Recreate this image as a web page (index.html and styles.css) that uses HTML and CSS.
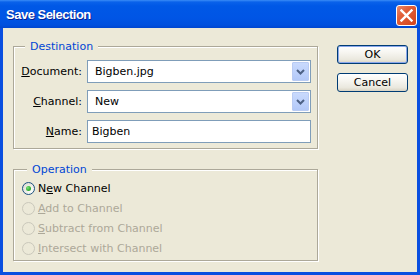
FILE: index.html
```html
<!DOCTYPE html>
<html lang="en">
<head>
    <meta charset="UTF-8">
    <meta name="viewport" content="width=device-width, initial-scale=1.0">
    <title>Save Selection</title>
    <link rel="stylesheet" href="styles.css">
</head>
<body>
    <div class="window">
        <div class="titlebar">
            <span class="title">Save Selection</span>
            <button class="close" title="Close">
                <svg width="13" height="13" viewBox="0 0 13 13">
                    <path d="M1.5 1.5 L11.5 11.5 M11.5 1.5 L1.5 11.5" stroke="#fff" stroke-width="2.4" stroke-linecap="square"/>
                </svg>
            </button>
        </div>
        <div class="client">
            <div class="groups">
                <fieldset class="group dest">
                    <legend>Destination</legend>
                    <div class="row">
                        <label><u>D</u>ocument:</label>
                        <div class="select">
                            <span class="value">Bigben.jpg</span>
                            <span class="drop"><svg width="9" height="6" viewBox="0 0 9 6"><path d="M1 1 L4.5 4.5 L8 1" fill="none" stroke="#4d6185" stroke-width="2"/></svg></span>
                        </div>
                    </div>
                    <div class="row">
                        <label><u>C</u>hannel:</label>
                        <div class="select">
                            <span class="value">New</span>
                            <span class="drop"><svg width="9" height="6" viewBox="0 0 9 6"><path d="M1 1 L4.5 4.5 L8 1" fill="none" stroke="#4d6185" stroke-width="2"/></svg></span>
                        </div>
                    </div>
                    <div class="row">
                        <label><u>N</u>ame:</label>
                        <input class="text" type="text" value="Bigben" spellcheck="false">
                    </div>
                </fieldset>
                <fieldset class="group op">
                    <legend>Operation</legend>
                    <div class="radio checked"><span class="circle"></span><span>N<u>e</u>w Channel</span></div>
                    <div class="radio disabled"><span class="circle"></span><span><u>A</u>dd to Channel</span></div>
                    <div class="radio disabled"><span class="circle"></span><span><u>S</u>ubtract from Channel</span></div>
                    <div class="radio disabled"><span class="circle"></span><span><u>I</u>ntersect with Channel</span></div>
                </fieldset>
            </div>
            <div class="buttons">
                <button class="btn default">OK</button>
                <button class="btn">Cancel</button>
            </div>
        </div>
    </div>
</body>
</html>
```

FILE: styles.css
```css
:root {
    --face: #ece9d8;
    --frame: #0a4fe0;
    --etch-dark: #aca899;
    --field-border: #7f9db9;
    --disabled: #aca899;
}
* {
    box-sizing: border-box;
}
html, body {
    margin: 0;
    padding: 0;
    width: 100%;
    height: 100%;
    font-family: "DejaVu Sans", sans-serif;
    font-size: 11px;
    color: #000;
}
.window {
    width: 420px;
    height: 275px;
    display: flex;
    flex-direction: column;
    background: var(--face);
}

.titlebar {
    height: 28px;
    flex: none;
    display: flex;
    align-items: center;
    justify-content: space-between;
    padding: 0 3px 0 6px;
    background: linear-gradient(to bottom, #3a8cf7 0, #0a62ea 2px, #0058e6 6px, #0055e5 18px, #0050de 25px, #0046d0 28px);
}
.title {
    font-family: "Liberation Sans", sans-serif;
    font-weight: bold;
    font-size: 13px;
    letter-spacing: -0.5px;
    color: #fff;
    text-shadow: 1px 1px 0 #0a1f8f;
}
.close {
    width: 21px;
    height: 21px;
    padding: 0;
    margin-top: 2px;
    display: flex;
    align-items: center;
    justify-content: center;
    border: 1px solid #fff;
    border-radius: 3px;
    background: linear-gradient(to bottom right, #e98a6c 0, #e2603a 35%, #d4431c 100%);
}

.client {
    flex: 1;
    display: grid;
    grid-template-columns: 305px 71px;
    column-gap: 19px;
    align-items: start;
    padding: 12px 0 0 10px;
    border: 3px solid var(--frame);
    border-top: none;
}

.group {
    margin: 0;
    border: 1px solid var(--etch-dark);
    box-shadow: 1px 1px 0 #fff, inset 1px 1px 0 #fff;
}
.group legend {
    margin-left: 5px;
    padding: 0 5px 0 5px;
    line-height: 13px;
    color: #0046d5;
    background: var(--face);
}
.dest {
    padding: 7px 6px 5px 6px;
    display: grid;
    row-gap: 7px;
}
.op {
    margin-top: 14px;
    padding: 2px 6px 2px 8px;
}

.row {
    display: grid;
    grid-template-columns: 1fr 224px;
    column-gap: 5px;
    align-items: center;
}
.row label {
    text-align: right;
}
.select {
    height: 23px;
    display: flex;
    align-items: center;
    justify-content: space-between;
    padding: 1px;
    border: 1px solid var(--field-border);
    background: #fff;
}
.select .value {
    padding-left: 6px;
}
.drop {
    width: 17px;
    height: 19px;
    display: flex;
    align-items: center;
    justify-content: center;
    border: 1px solid #b9cbf3;
    border-radius: 1px;
    background: linear-gradient(to bottom, #c9dafd 0, #bcd0fb 60%, #b2c8f8 100%);
}
.text {
    height: 23px;
    width: 224px;
    margin: 0;
    padding: 0 4px;
    border: 1px solid var(--field-border);
    font: inherit;
    outline: none;
}

.radio {
    height: 20px;
    display: flex;
    align-items: center;
    gap: 3px;
}
.circle {
    width: 13px;
    height: 13px;
    flex: none;
    display: flex;
    align-items: center;
    justify-content: center;
    border: 1px solid #1c5180;
    border-radius: 50%;
    background: radial-gradient(circle at 70% 70%, #fff 0, #f0f0ea 40%, #d6d5cc 100%);
}
.checked .circle::after {
    content: "";
    width: 5px;
    height: 5px;
    border-radius: 50%;
    background: radial-gradient(circle at 35% 35%, #7be27b 0, #2fb02f 60%, #1d8f1d 100%);
}
.disabled {
    color: var(--disabled);
}
.disabled .circle {
    border-color: #cac8bb;
    background: var(--face);
}

.buttons {
    display: flex;
    flex-direction: column;
    gap: 9px;
    margin-top: 5px;
}
.btn {
    height: 19px;
    padding: 0;
    font: inherit;
    color: #000;
    border: 1px solid #003c74;
    border-radius: 3px;
    background: linear-gradient(to bottom, #fff 0, #f6f5f0 40%, #eae8de 80%, #d8d2c2 100%);
}
.btn.default {
    box-shadow: inset 0 0 0 1px #8aa7eb;
}
```
